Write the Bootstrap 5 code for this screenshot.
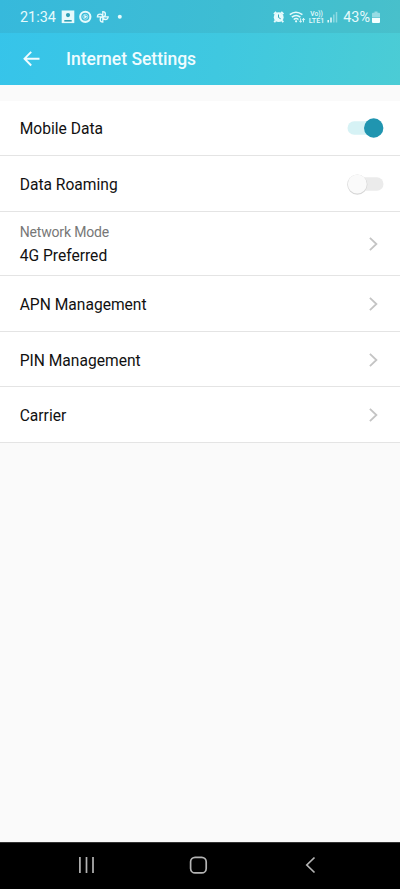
<!DOCTYPE html>
<html lang="en">
<head>
<meta charset="utf-8">
<meta name="viewport" content="width=device-width, initial-scale=1">
<title>Internet Settings</title>
<link rel="stylesheet" href="https://cdn.jsdelivr.net/npm/bootstrap@5.3.0/dist/css/bootstrap.min.css">
<style>
  body { font-family: Roboto, "Liberation Sans", sans-serif; background: #fafafa; color: #111; height: 889px; }
  .app-head { height: 85px; background: linear-gradient(100deg, #36c4ea 0%, #3fc8e0 55%, #4bccd5 100%); }
  .status-bar { height: 33px; padding: 0 20px; background: rgba(60, 130, 140, .15); color: #e6fafc; font-size: 14.4px; }
  .status-bar span { line-height: 20px; padding-top: 2px; }
  .title-bar { height: 52px; padding-left: 23px; }
  .title-bar h1 { font-size: 17.5px; font-weight: 500; line-height: 52px; margin-left: 26px; color: #f0fcff; }
  .settings { margin-top: 15.5px; }
  .setting { height: 55.6px; padding: 1px 20px 0 19.7px; font-size: 15.6px; line-height: 22px; background: #fff; color: #111; border-radius: 0; }
  .settings > .setting, .settings > .setting:last-child { border-width: 0 0 1px; border-color: #e4e4e4; }
  .setting > span { padding-top: 2.4px; }
  .setting.two-line { height: 64.6px; }
  .two-line > div { padding-top: 4px; }
  .hint { font-size: 14px; letter-spacing: -.17px; line-height: 22px; color: #777; }
  .value { line-height: 27px; }
  .switch-art { margin-right: -4px; }
  .nav-keys { height: 47px; background: #000; border-top: 1px solid #333; }
  svg { display: block; flex: none; }
</style>
<script src="https://cdn.jsdelivr.net/npm/bootstrap@5.3.0/dist/js/bootstrap.bundle.min.js"></script>
</head>
<body class="d-flex flex-column overflow-hidden">
<header class="app-head">
  <div class="status-bar d-flex align-items-center justify-content-between">
    <div class="d-flex align-items-center">
      <span>21:34</span>
      <svg class="ms-1" width="66" height="16" viewBox="60 8.5 66 16" fill="none" stroke="#e6fafc">
        <path d="M61.7 10h12.6v12.6H61.7z" fill="#e6fafc" stroke="none"/>
        <circle cx="68" cy="14.6" r="2.1" fill="#2e9fb5" stroke="none"/><path d="M64.3 20.3h7.4" stroke="#2e9fb5" stroke-width="1.6"/>
        <circle cx="85.3" cy="16.3" r="5.1" stroke-width="2.1"/><circle cx="85.3" cy="16.3" r="2.5" stroke-width=".6"/><path d="M84.3 14.3v4l3-2z" fill="#e6fafc" stroke="none"/>
        <path d="M102.8 16.3v-5.2a2.6 2.6 0 0 1 0 5.2h5.4a2.6 2.6 0 0 1-5.4 0v5.2a2.6 2.6 0 0 1 0-5.2h-5.4a2.6 2.6 0 0 1 5.4 0" stroke-width="1.3"/>
        <circle cx="119.8" cy="16.3" r="2" fill="#e6fafc" stroke="none"/>
      </svg>
    </div>
    <div class="d-flex align-items-center">
      <svg width="68" height="20" viewBox="271 6.5 68 20" fill="none" stroke="#e6fafc">
        <circle cx="278.7" cy="16.7" r="4.9" fill="#e6fafc" stroke="none"/><path d="M274 13.6l2.2-2.2M283.4 13.6l-2.2-2.2M275.5 20l-1.2 1.7M282 20l1.2 1.7" stroke-width="1.9"/><path d="M278.5 14v3l2.2 1.3" stroke="#35a7b8"/>
        <path d="M289.8 14.2q6-5 12.6 0M291.8 16.7q4.3-3.5 8.6 0M293.7 19q2.4-2 4.8 0" stroke-width="1.5"/><circle cx="296.1" cy="20.8" r="1.1" fill="#e6fafc" stroke="none"/>
        <path d="M300.6 17.8v4m-1.5-1.6l1.5 1.6 1.4-1.6M303.5 21.8v-4m-1.4 1.6l1.4-1.6 1.4 1.6" stroke-width=".9"/>
        <g fill="#e6fafc" stroke="none" font-family="Roboto, sans-serif" font-weight="500" font-size="6.8"><text x="310.3" y="15.7" textLength="12.5" lengthAdjust="spacingAndGlyphs">Vo))</text><text x="308.8" y="22" textLength="15.5" lengthAdjust="spacingAndGlyphs">LTE1</text></g>
        <path d="M328.2 22v-2.5M331 22v-5" stroke-width="1.5"/><path d="M333.8 22v-8M336.5 22V11.5" stroke-width="1.5" opacity=".45"/>
      </svg>
      <span class="ms-1">43%</span>
      <svg width="10" height="14" viewBox="-2 -.5 10 14"><path d="M2.5 1h3v1.300H7q1 0 1 1V7H0V3.300q0-1 1-1h1.500z" fill="#e6fafc" opacity=".5"/><path d="M0 7.500h8v4q0 1-1 1H1q-1 0-1-1z" fill="#f4ffff"/></svg>
    </div>
  </div>
  <div class="title-bar d-flex align-items-center">
    <svg width="17" height="16" viewBox="0 0 17 16" fill="none" stroke="#f0fcff" stroke-width="1.9"><path d="M8.2 .9L1.5 7.7l6.7 6.8M1.5 7.7H16.5"/></svg>
    <h1 class="mb-0">Internet Settings</h1>
  </div>
</header>
<main class="flex-grow-1">
  <div class="settings list-group list-group-flush">
    <div class="setting list-group-item d-flex align-items-center justify-content-between"><span>Mobile Data</span>
      <svg class="switch-art" width="38" height="24" viewBox="0 0 38 24"><rect x="1.5" y="5.3" width="34" height="13.4" rx="6.7" fill="#d6f2f5"/><circle cx="27.7" cy="12" r="9.7" fill="#2095b0"/></svg></div>
    <div class="setting list-group-item d-flex align-items-center justify-content-between"><span>Data Roaming</span>
      <svg class="switch-art" width="38" height="24" viewBox="0 0 38 24"><rect x="3.5" y="5.3" width="34" height="13.4" rx="6.7" fill="#ebebeb"/><circle cx="11.3" cy="12.6" r="10.1" fill="#d6d6d6"/><circle cx="11.3" cy="12" r="9.5" fill="#fafafa"/></svg></div>
    <div class="setting two-line list-group-item d-flex align-items-center justify-content-between">
      <div><div class="hint">Network Mode</div><div class="value">4G Preferred</div></div>
      <svg width="11" height="16" viewBox="0 0 11 16" fill="none" stroke="#c4c4c4" stroke-width="1.8"><path d="M.9 1.8L7.4 8l-6.5 6.2"/></svg></div>
    <div class="setting list-group-item d-flex align-items-center justify-content-between"><span>APN Management</span>
      <svg width="11" height="16" viewBox="0 0 11 16" fill="none" stroke="#c4c4c4" stroke-width="1.8"><path d="M.9 1.8L7.4 8l-6.5 6.2"/></svg></div>
    <div class="setting list-group-item d-flex align-items-center justify-content-between"><span>PIN Management</span>
      <svg width="11" height="16" viewBox="0 0 11 16" fill="none" stroke="#c4c4c4" stroke-width="1.8"><path d="M.9 1.8L7.4 8l-6.5 6.2"/></svg></div>
    <div class="setting list-group-item d-flex align-items-center justify-content-between"><span>Carrier</span>
      <svg width="11" height="16" viewBox="0 0 11 16" fill="none" stroke="#c4c4c4" stroke-width="1.8"><path d="M.9 1.8L7.4 8l-6.5 6.2"/></svg></div>
  </div>
</main>
<footer class="nav-keys">
  <svg width="400" height="46" viewBox="0 843 400 46" fill="none" stroke="#b4b4b4" stroke-width="1.7"><path d="M79.9 857v16M86.5 857v16M93 857v16"/><rect x="190.6" y="857.3" width="15.6" height="15.6" rx="4.5"/><path d="M314.5 857.5l-7.7 7.5 7.7 7.5"/></svg>
</footer>
</body>
</html>
